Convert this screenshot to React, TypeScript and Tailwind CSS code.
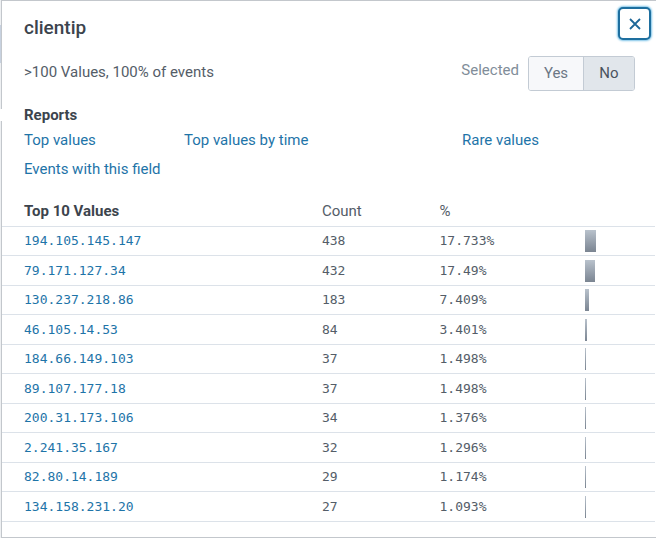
import React from "react";

const rows = [
  { ip: "194.105.145.147", count: 438, percent: 17.733 },
  { ip: "79.171.127.34", count: 432, percent: 17.49 },
  { ip: "130.237.218.86", count: 183, percent: 7.409 },
  { ip: "46.105.14.53", count: 84, percent: 3.401 },
  { ip: "184.66.149.103", count: 37, percent: 1.498 },
  { ip: "89.107.177.18", count: 37, percent: 1.498 },
  { ip: "200.31.173.106", count: 34, percent: 1.376 },
  { ip: "2.241.35.167", count: 32, percent: 1.296 },
  { ip: "82.80.14.189", count: 29, percent: 1.174 },
  { ip: "134.158.231.20", count: 27, percent: 1.093 },
];

const link = "text-[#1e74a8] hover:underline";

function Header() {
  return (
    <header className="flex items-start justify-between pt-[6px] pr-[5px] pl-[22px]">
      <h1 className="pt-[9px] text-[19px] leading-6 font-medium text-[#3c444d]">clientip</h1>
      <button
        type="button"
        aria-label="Close"
        className="flex size-[33px] items-center justify-center rounded-[5px] border-2 border-[#1e6f9f] bg-white text-[#1e6798] shadow-[0_0_2px_1px_#7fc4e8]"
      >
        <svg width="12" height="12" viewBox="0 0 12 12" fill="none" stroke="currentColor" strokeWidth="1.8" aria-hidden="true">
          <path d="M1 1L11 11M11 1L1 11" />
        </svg>
      </button>
    </header>
  );
}

function Summary() {
  return (
    <div className="flex items-start justify-between pt-4 pr-[21px] pl-[22px] text-[15px] leading-5">
      <p className="pt-[6px]">&gt;100 Values, 100% of events</p>
      <div className="flex gap-[9px]" role="group" aria-labelledby="selected-label">
        <span id="selected-label" className="pt-1 text-[#818d99]">Selected</span>
        <div className="flex h-[35px] overflow-hidden rounded-[3px] border border-[#c3cbd4]">
          <button type="button" aria-pressed="false" className="w-[55px] border-r border-[#c3cbd4] bg-[#f7f8fa] pb-[2px] text-[#6b7785]">
            Yes
          </button>
          <button type="button" aria-pressed="true" className="w-[50px] bg-[#e1e6eb] pb-[2px] text-[#4a535e]">
            No
          </button>
        </div>
      </div>
    </div>
  );
}

function Reports() {
  return (
    <section className="pt-[14px] pl-[22px] text-[15px] leading-5">
      <h2 className="font-bold text-[#3c444d]">Reports</h2>
      <ul className="grid grid-cols-[160fr_278fr_194fr] gap-y-[9px] pt-[5px]">
        <li><a href="#top" className={link}>Top values</a></li>
        <li><a href="#time" className={link}>Top values by time</a></li>
        <li><a href="#rare" className={link}>Rare values</a></li>
        <li><a href="#events" className={link}>Events with this field</a></li>
      </ul>
    </section>
  );
}

function ValuesTable() {
  return (
    <div className="pt-[17px] pr-px">
      <table className="w-full table-fixed border-separate border-spacing-0 text-left">
        <colgroup>
          <col className="w-[49%]" />
          <col className="w-[18%]" />
          <col className="w-[22%]" />
          <col />
        </colgroup>
        <thead className="text-[15px] leading-5">
          <tr className="h-[31px]">
            <th scope="col" className="border-b border-[#dce2e9] pl-[22px] font-bold text-[#3c444d]">Top 10 Values</th>
            <th scope="col" className="border-b border-[#dce2e9] font-normal">Count</th>
            <th scope="col" className="border-b border-[#dce2e9] font-normal">%</th>
            <td className="border-b border-[#dce2e9]" />
          </tr>
        </thead>
        <tbody className="font-['DejaVu_Sans_Mono',monospace] text-[13px] leading-5">
          {rows.map((row) => (
            <tr key={row.ip} className="h-[29px] even:h-[30px]">
              <td className="border-b border-[#dce2e9] pl-[22px]">
                <a href={"#" + row.ip} className={link}>{row.ip}</a>
              </td>
              <td className="border-b border-[#dce2e9]">{row.count}</td>
              <td className="border-b border-[#dce2e9]">{row.percent}%</td>
              <td className="border-b border-[#dce2e9] pl-[2px]">
                <div
                  className="h-[22px] bg-linear-to-b from-[#b9c2cc] to-[#7b8592]"
                  style={{ width: Math.max(1, Math.round(row.percent * 0.6)) }}
                />
              </td>
            </tr>
          ))}
        </tbody>
      </table>
    </div>
  );
}

export default function App() {
  return (
    <div className="relative flex bg-white font-[Roboto,sans-serif] text-[#545d68]">
      <div className="flex w-px flex-col">
        <div className="h-[25px] bg-[#eef0f2]" />
        <div className="h-[38px] bg-[#c7d1df]" />
        <div className="grow bg-[#eef0f2]" />
      </div>
      <main className="min-w-0 flex-1 border-y border-l border-[#c3c7cc] pb-[15px]">
        <Header />
        <Summary />
        <Reports />
        <ValuesTable />
      </main>
      <div className="absolute top-[109px] left-0 h-3 w-[2px] bg-white" />
    </div>
  );
}
